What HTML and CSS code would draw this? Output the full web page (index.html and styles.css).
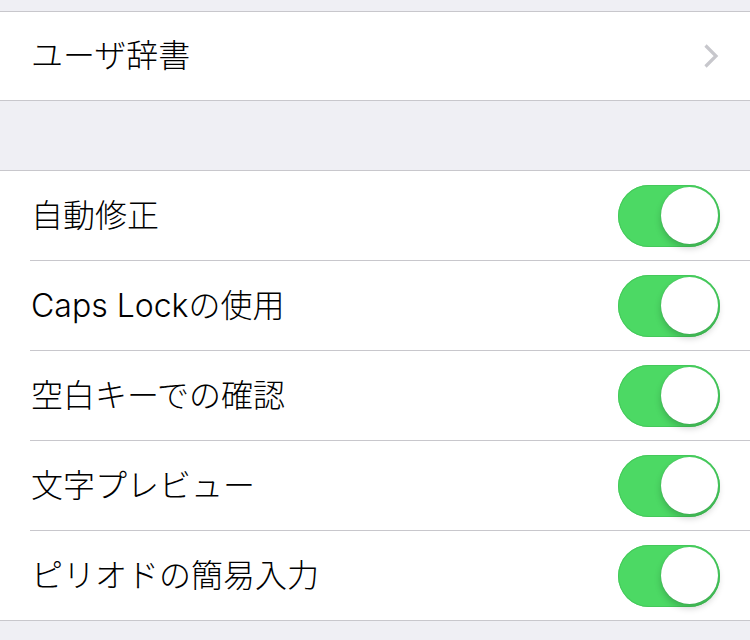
FILE: index.html
```html
<!DOCTYPE html>
<html lang="ja">
<head>
<meta charset="utf-8">
<link rel="stylesheet" href="styles.css">
</head>
<body>
<div class="spacer-top"></div>
<section class="group">
  <div class="row row-single">
    <div class="row-inner">
      <span class="label">ユーザ辞書</span>
      <svg class="chevron" width="16" height="26" viewBox="0 0 16 26"><path d="M2.5 2.5 L13 13 L2.5 23.5" fill="none" stroke="#c7c7cc" stroke-width="3.2" stroke-linecap="butt" stroke-linejoin="miter"/></svg>
    </div>
  </div>
</section>
<div class="spacer-mid"></div>
<section class="group">
  <div class="row"><div class="row-inner"><span class="label">自動修正</span><span class="toggle"><span class="knob"></span></span></div></div>
  <div class="row"><div class="row-inner"><span class="label">Caps Lockの使用</span><span class="toggle"><span class="knob"></span></span></div></div>
  <div class="row"><div class="row-inner"><span class="label">空白キーでの確認</span><span class="toggle"><span class="knob"></span></span></div></div>
  <div class="row"><div class="row-inner"><span class="label">文字プレビュー</span><span class="toggle"><span class="knob"></span></span></div></div>
  <div class="row"><div class="row-inner"><span class="label">ピリオドの簡易入力</span><span class="toggle"><span class="knob"></span></span></div></div>
</section>
</body>
</html>
```
FILE: styles.css
```css
html, body {
  margin: 0;
  padding: 0;
  background: #efeff4;
  font-family: "Inter", "Noto Sans CJK JP", sans-serif;
  color: #000;
}
.spacer-top { height: 11px; }
.spacer-mid { height: 69px; }
.group {
  background: #fff;
  border-top: 1px solid #c8c7cc;
  border-bottom: 1px solid #c8c7cc;
}
.row {
  padding-left: 30px;
}
.row-inner {
  display: flex;
  align-items: center;
  justify-content: space-between;
  height: 89px;
  padding-right: 30px;
  border-bottom: 1px solid #c8c7cc;
  box-sizing: content-box;
}
.row:last-child .row-inner { border-bottom: none; }
.row-single .row-inner { height: 88px; }
.label {
  font-size: 32px;
  font-weight: 300;
  line-height: 1;
  padding-left: 1px;
  margin-top: 0;
  letter-spacing: 0;
}
.chevron { display: block; margin-right: 1px; }
.toggle {
  position: relative;
  display: block;
  width: 102px;
  height: 62px;
  border-radius: 31px;
  background: #4cd964;
  box-shadow: inset 0 0 0 1px #45c95b;
}
.knob {
  position: absolute;
  top: 2px;
  right: 2px;
  width: 57px;
  height: 57px;
  border-radius: 50%;
  background: #fff;
  box-shadow: 0 4px 7px rgba(0,0,0,0.2), 0 0 1px rgba(0,0,0,0.2);
}
```
